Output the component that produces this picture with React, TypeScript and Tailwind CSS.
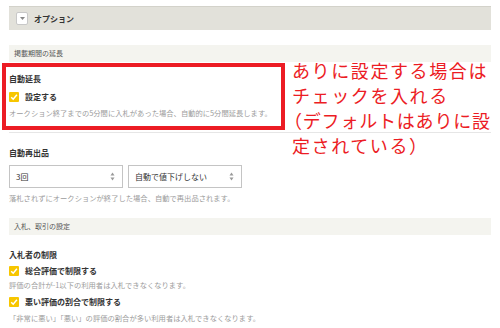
import React from "react";

const font = { fontFamily: '"Noto Sans CJK JP", "Noto Sans", sans-serif' };

function Check() {
  return (
    <span className="flex h-[10px] w-[10px] shrink-0 items-center justify-center rounded-[1px] bg-[#f7c600]">
      <svg width="8" height="8" viewBox="0 0 8 8">
        <path d="M1.2 4.2 L3.2 6.2 L6.9 1.8" fill="none" stroke="#fff" strokeWidth="1.5" />
      </svg>
    </span>
  );
}

function Select({ label, w }: { label: string; w: string }) {
  return (
    <div className={`flex h-[23px] ${w} items-center justify-between border border-[#c4c4c4] bg-white pl-[6px] pr-[7px]`}>
      <span className="text-[8px] leading-[10px] text-[#333]">{label}</span>
      <svg width="5" height="9" viewBox="0 0 5 9">
        <path d="M2.5 0.5 L4.5 3.5 L0.5 3.5 Z" fill="#999" />
        <path d="M2.5 8.5 L4.5 5.5 L0.5 5.5 Z" fill="#999" />
      </svg>
    </div>
  );
}

export default function App() {
  return (
    <div className="relative h-[328px] w-[500px] overflow-hidden bg-white" style={font}>
      <div className="flex w-[491px] flex-col pl-[9px]">
        {/* header */}
        <div className="mt-[6px] flex h-[24px] items-center border-t border-[#d3d2ca] bg-[#e2e1da] pl-[7px]">
          <span className="flex h-[13px] w-[12px] items-center justify-center rounded-[2px] border border-[#c8c8c8] bg-white">
            <svg width="5" height="3" viewBox="0 0 5 3">
              <path d="M0 0 L5 0 L2.5 3 Z" fill="#888" />
            </svg>
          </span>
          <span className="ml-[6px] text-[8px] font-bold leading-[10px] text-[#333]">オプション</span>
        </div>

        {/* section 1 */}
        <div className="mt-[15px] flex h-[17px] items-center bg-[#f4f4ef] pl-[5px]">
          <span className="text-[7px] leading-[9px] text-[#555]">掲載期間の延長</span>
        </div>
        <div className="mt-[12px] h-[10px] text-[8px] font-bold leading-[10px] text-[#333]">自動延長</div>
        <div className="mt-[7px] flex h-[12px] items-center gap-[6px]">
          <Check />
          <span className="text-[8px] font-bold leading-[10px] text-[#333]">設定する</span>
        </div>
        <div className="mt-[5px] h-[10px] whitespace-nowrap text-[7.3px] leading-[10px] text-[#9c9c9c]">
          オークション終了までの5分間に入札があった場合、自動的に5分間延長します。
        </div>
        <div className="mt-[14px] border-t border-[#e6e6e6]" />
        <div className="mt-[15px] h-[10px] text-[8px] font-bold leading-[10px] text-[#333]">自動再出品</div>
        <div className="mt-[7px] flex gap-[5px]">
          <Select label="3回" w="w-[114px]" />
          <Select label="自動で値下げしない" w="w-[114px]" />
        </div>
        <div className="mt-[5px] h-[10px] whitespace-nowrap text-[7.3px] leading-[10px] text-[#9c9c9c]">
          落札されずにオークションが終了した場合、自動で再出品されます。
        </div>

        {/* section 2 */}
        <div className="mt-[15px] flex h-[17px] items-center bg-[#f4f4ef] pl-[5px]">
          <span className="text-[7px] leading-[9px] text-[#555]">入札、取引の設定</span>
        </div>
        <div className="mt-[15px] h-[10px] text-[8px] font-bold leading-[10px] text-[#333]">入札者の制限</div>
        <div className="mt-[5px] flex h-[12px] items-center gap-[6px]">
          <Check />
          <span className="text-[8px] font-bold leading-[10px] text-[#333]">総合評価で制限する</span>
        </div>
        <div className="mt-[3px] h-[10px] whitespace-nowrap text-[7.3px] leading-[10px] text-[#9c9c9c]">
          評価の合計が-1以下の利用者は入札できなくなります。
        </div>
        <div className="mt-[6px] flex h-[12px] items-center gap-[6px]">
          <Check />
          <span className="text-[8px] font-bold leading-[10px] text-[#333]">悪い評価の割合で制限する</span>
        </div>
        <div className="mt-[5px] h-[10px] whitespace-nowrap text-[7.3px] leading-[10px] text-[#9c9c9c]">
          「非常に悪い」「悪い」の評価の割合が多い利用者は入札できなくなります。
        </div>
      </div>

      {/* annotation */}
      <div className="absolute left-[2px] top-[63px] h-[67px] w-[283px] border-[4px] border-[#ec1c24]" />
      <div className="absolute left-[292px] top-[58px] whitespace-nowrap text-[18px] leading-[25px] tracking-[1.6px] text-[#ec1c24]">
        <div>ありに設定する場合は</div>
        <div>チェックを入れる</div>
        <div className="-ml-[8px] tracking-[0.8px]">（デフォルトはありに設</div>
        <div>定されている）</div>
      </div>
    </div>
  );
}
